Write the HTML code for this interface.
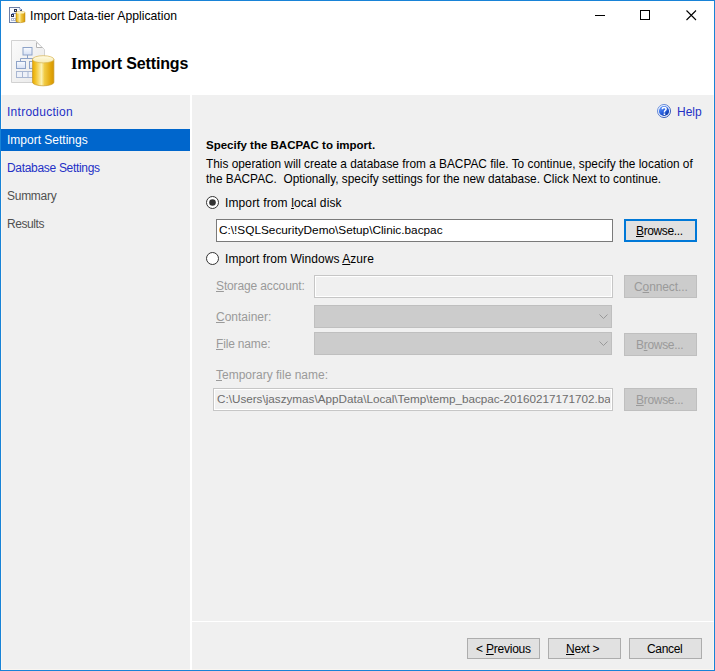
<!DOCTYPE html>
<html><head><meta charset="utf-8">
<style>
html,body{margin:0;padding:0;}
body{width:715px;height:671px;position:relative;overflow:hidden;background:#f0f0f0;font-family:"Liberation Sans",sans-serif;}
.a{position:absolute;}
.t{position:absolute;white-space:nowrap;line-height:12px;font-size:12px;color:#000;}
#win{position:absolute;left:0;top:0;width:713px;height:669px;border:1px solid #1883d7;background:#f0f0f0;}
#top{left:1px;top:1px;width:713px;height:94px;background:#fff;}
#splitv{left:190px;top:95px;width:2px;height:575px;background:#fff;}
#splith{left:192px;top:621px;width:522px;height:1px;background:#fff;}
#leftedge{left:1px;top:95px;width:1px;height:575px;background:#faf6f1;}
#rightedge{left:713px;top:95px;width:1px;height:575px;background:#faf6f1;}
#botedge{left:1px;top:669px;width:713px;height:1px;background:#faf6f1;}
#sel{left:1px;top:129px;width:189px;height:22px;background:#0066cc;}
.link{color:#2430c6;}
.gray{color:#505050;}
.dis{color:#9a9a9a;}
.btn{position:absolute;box-sizing:border-box;background:#e1e1e1;border:1px solid #adadad;}
.btnd{position:absolute;box-sizing:border-box;background:#cccccc;border:1px solid #bfbfbf;}
.u{text-decoration:underline;}
</style></head><body>
<div id="win"></div>
<div class="a" id="top"></div>
<div class="a" id="leftedge"></div>
<div class="a" id="rightedge"></div>
<div class="a" id="botedge"></div>
<div class="a" id="splitv"></div>
<div class="a" id="splith"></div>

<!-- title bar -->
<div class="t" style="left:30px;top:10px;font-size:12.2px;">Import Data-tier Application</div>
<div class="a" style="left:595px;top:15px;width:10px;height:1px;background:#000;"></div>
<div class="a" style="left:640px;top:10px;width:8px;height:8px;border:1px solid #000;"></div>
<svg class="a" style="left:686px;top:10px" width="11" height="11" viewBox="0 0 11 11"><path d="M0.5 0.5L10 10M10 0.5L0.5 10" stroke="#000" stroke-width="1.1" fill="none"/></svg>

<!-- header -->
<div class="t" style="left:71px;top:56px;font-size:16px;line-height:16px;font-weight:bold;letter-spacing:-0.14px;"><span style="font-family:'Liberation Serif',serif;font-size:16.5px;">I</span>mport Settings</div>

<!-- nav -->
<div class="a" id="sel"></div>
<div class="t link" style="left:7px;top:106px;letter-spacing:0.27px;">Introduction</div>
<div class="t" style="left:7px;top:134px;color:#fff;">Import Settings</div>
<div class="t link" style="left:7px;top:162px;letter-spacing:-0.31px;">Database Settings</div>
<div class="t gray" style="left:7px;top:190px;letter-spacing:-0.27px;">Summary</div>
<div class="t gray" style="left:7px;top:218px;letter-spacing:-0.43px;">Results</div>

<!-- help -->
<div class="t link" style="left:677px;top:106px;">Help</div>

<!-- content -->
<div class="t" style="left:206px;top:139px;font-weight:bold;font-size:11.5px;">Specify the BACPAC to import.</div>
<div class="t" style="left:206px;top:158px;font-size:11.85px;">This operation will create a database from a BACPAC file. To continue, specify the location of</div>
<div class="t" style="left:206px;top:173px;font-size:11.85px;">the BACPAC.&nbsp; Optionally, specify settings for the new database. Click Next to continue.</div>

<div class="t" style="left:225px;top:197px;letter-spacing:0.12px;">Import from <span class="u">l</span>ocal disk</div>
<div class="a" style="left:216px;top:219px;width:395px;height:21px;border:1px solid #7a7a7a;background:#fff;"></div>
<div class="t" style="left:219px;top:224px;font-size:11.8px;">C:\!SQLSecurityDemo\Setup\Clinic.bacpac</div>
<div class="a" style="left:624px;top:219px;width:69px;height:19px;border:2px solid #0078d7;background:#e1e1e1;"></div>
<div class="t" style="left:636px;top:225px;letter-spacing:-0.37px;"><span class="u">B</span>rowse...</div>

<div class="t" style="left:225px;top:253px;letter-spacing:0.06px;">Import from Windows <span class="u">A</span>zure</div>

<div class="t dis" style="left:216px;top:280px;letter-spacing:-0.13px;"><span class="u">S</span>torage account:</div>
<div class="a" style="left:314px;top:275px;width:297px;height:21px;border:1px solid #c6c6c6;background:#f0f0f0;box-shadow:inset 0 0 0 1px #fff;"></div>
<div class="btnd" style="left:624px;top:275px;width:73px;height:23px;"></div>
<div class="t dis" style="left:634px;top:281px;letter-spacing:-0.11px;">C<span class="u">o</span>nnect...</div>

<div class="t dis" style="left:216px;top:311px;"><span class="u">C</span>ontainer:</div>
<div class="btnd" style="left:314px;top:305px;width:298px;height:23px;"></div>
<div class="t dis" style="left:216px;top:338px;letter-spacing:-0.17px;"><span class="u">F</span>ile name:</div>
<div class="btnd" style="left:314px;top:332px;width:298px;height:23px;"></div>
<div class="btnd" style="left:624px;top:333px;width:73px;height:23px;"></div>
<div class="t dis" style="left:636px;top:339px;letter-spacing:-0.3px;">B<span class="u">r</span>owse...</div>

<div class="t dis" style="left:216px;top:369px;"><span class="u">T</span>emporary file name:</div>
<div class="a" style="left:213px;top:388px;width:398px;height:21px;border:1px solid #c6c6c6;background:#f0f0f0;box-shadow:inset 0 0 0 1px #fff;overflow:hidden;"></div>
<div class="a" style="left:214px;top:389px;width:396px;height:21px;overflow:hidden;"><div class="t" style="left:3px;top:4px;font-size:11.7px;color:#6d6d6d;">C:\Users\jaszymas\AppData\Local\Temp\temp_bacpac-20160217171702.bacpac</div></div>
<div class="btnd" style="left:624px;top:388px;width:73px;height:23px;"></div>
<div class="t dis" style="left:636px;top:394px;letter-spacing:-0.3px;"><span class="u">B</span>rowse...</div>

<!-- bottom buttons -->
<div class="btn" style="left:467px;top:638px;width:73px;height:21px;"></div>
<div class="t" style="left:476px;top:643px;letter-spacing:-0.22px;">&lt; <span class="u">P</span>revious</div>
<div class="btn" style="left:548px;top:638px;width:73px;height:21px;"></div>
<div class="t" style="left:566px;top:643px;letter-spacing:-0.3px;"><span class="u">N</span>ext &gt;</div>
<div class="btn" style="left:629px;top:638px;width:73px;height:21px;"></div>
<div class="t" style="left:647px;top:643px;letter-spacing:-0.32px;">Cancel</div>

<!-- title icon -->
<svg class="a" style="left:7px;top:5px" width="20" height="20" viewBox="7 5 20 20" shape-rendering="crispEdges">
<defs>
<linearGradient id="gs" x1="0" x2="1" y1="0" y2="0"><stop offset="0" stop-color="#e0a800"/><stop offset="0.15" stop-color="#f2c83a"/><stop offset="0.4" stop-color="#f8eaa4"/><stop offset="0.6" stop-color="#eec540"/><stop offset="1" stop-color="#d89800"/></linearGradient>
</defs>
<rect x="9" y="7" width="11" height="16" fill="#6c7ea6"/>
<rect x="10" y="8" width="10" height="14" fill="#f7f9fd"/>
<rect x="20" y="9" width="2" height="13" fill="#6c7ea6"/>
<rect x="19" y="8" width="2" height="2" fill="#b9c6e6"/>
<rect x="20" y="10" width="2" height="1" fill="#3d4b70"/>
<rect x="14" y="9" width="3" height="3" fill="#27314d"/>
<rect x="15" y="10" width="1" height="1" fill="#dfe8ff"/>
<rect x="11" y="14" width="3" height="3" fill="#27314d"/>
<rect x="12" y="15" width="1" height="1" fill="#dfe8ff"/>
<rect x="12" y="13" width="4" height="1" fill="#7d95d0"/>
<rect x="11" y="18" width="5" height="3" fill="#aeb9d2"/>
<rect x="12" y="19" width="1" height="1" fill="#fff"/>
<rect x="14" y="19" width="1" height="1" fill="#fff"/>
</svg>
<svg class="a" style="left:7px;top:5px" width="20" height="20" viewBox="7 5 20 20">
<path d="M16 12.2Q20.5 10.2 25 12.2V21.8Q20.5 23.6 16 21.8Z" fill="url(#gs)" stroke="#b8891c" stroke-width="0.5"/>
<ellipse cx="20.5" cy="12.4" rx="4.2" ry="1.2" fill="#fcf3c8"/>
</svg>

<!-- header icon -->
<svg class="a" style="left:5px;top:35px" width="55" height="55" viewBox="5 35 55 55">
<defs>
<linearGradient id="gc" x1="0" x2="1" y1="0" y2="0"><stop offset="0" stop-color="#e6a800"/><stop offset="0.15" stop-color="#f3c42c"/><stop offset="0.42" stop-color="#fbf1b2"/><stop offset="0.56" stop-color="#f1cb44"/><stop offset="0.85" stop-color="#e2a60a"/><stop offset="1" stop-color="#d69600"/></linearGradient>
<linearGradient id="gt" x1="0" x2="0" y1="0" y2="1"><stop offset="0" stop-color="#fffbe6"/><stop offset="1" stop-color="#f6eab0"/></linearGradient>
<linearGradient id="gd" x1="0" x2="1" y1="0" y2="1"><stop offset="0" stop-color="#fbfbfb"/><stop offset="1" stop-color="#e8e8e8"/></linearGradient>
<linearGradient id="gb" x1="0" x2="0" y1="0" y2="1"><stop offset="0" stop-color="#fafcff"/><stop offset="1" stop-color="#d6e0f4"/></linearGradient>
</defs>
<path d="M11.5 40.5H35.5L44.5 49.5V82.5H11.5Z" fill="url(#gd)" stroke="#d2d2d2" stroke-width="1"/>
<path d="M36.5 42.5V47.5H42.5" fill="#fff" stroke="#b4b4b4" stroke-width="1"/>
<path d="M36.5 42.5L42.5 47.5" stroke="#cfcfcf" stroke-width="0.8"/>
<rect x="23" y="47.5" width="9" height="7.5" fill="url(#gb)" stroke="#8ea3c8" stroke-width="1"/>
<path d="M27.5 55V58.5M20.5 61V58.5H34V61" stroke="#8ea3c8" stroke-width="1" fill="none"/>
<rect x="16.5" y="61.5" width="9" height="7" fill="url(#gb)" stroke="#8ea3c8" stroke-width="1"/>
<rect x="29.5" y="61.5" width="9" height="7" fill="url(#gb)" stroke="#8ea3c8" stroke-width="1"/>
<rect x="16.5" y="71.5" width="21" height="6" fill="#eef1f8" stroke="#a9b7d2" stroke-width="1"/>
<path d="M22.5 71.5V77.5M28 71.5V77.5M33 71.5V77.5" stroke="#a9b7d2" stroke-width="1"/>
<path d="M32.5 59.3V82.2A10.7 3.6 0 0 0 53.9 82.2V59.3Z" fill="url(#gc)"/>
<path d="M32.5 59.3V82.2A10.7 3.6 0 0 0 53.9 82.2V59.3" fill="none" stroke="#c99a2a" stroke-width="0.7"/>
<ellipse cx="43.2" cy="59.3" rx="10.7" ry="3.6" fill="url(#gt)" stroke="#d9b450" stroke-width="0.7"/>
</svg>

<!-- help icon -->
<svg class="a" style="left:657px;top:104px" width="14" height="14" viewBox="0 0 14 14">
<defs>
<linearGradient id="gh" x1="0.2" x2="0.8" y1="0.1" y2="0.9"><stop offset="0" stop-color="#5b93fa"/><stop offset="0.5" stop-color="#2b62e0"/><stop offset="1" stop-color="#0b38a8"/></linearGradient>
<linearGradient id="gr" x1="0" x2="1" y1="0" y2="1"><stop offset="0" stop-color="#7fa2e6"/><stop offset="1" stop-color="#1f44a8"/></linearGradient>
</defs>
<circle cx="7" cy="7" r="6.5" fill="#eef4ff" stroke="url(#gr)" stroke-width="1"/>
<circle cx="7" cy="7" r="5.1" fill="url(#gh)"/>
<path d="M5.3 5.2Q5.3 3.5 7.2 3.5Q9.1 3.5 9.1 5.1Q9.1 6.1 8 6.7Q7.4 7.1 7.4 8.4" stroke="#fff" stroke-width="1.5" fill="none"/>
<rect x="6.6" y="9.4" width="1.6" height="1.6" fill="#fff"/>
</svg>

<!-- radios -->
<svg class="a" style="left:206px;top:196px" width="13" height="13" viewBox="0 0 13 13">
<circle cx="6.5" cy="6.5" r="6" fill="#fff" stroke="#333" stroke-width="1"/>
<circle cx="6.5" cy="6.5" r="3.3" fill="#333"/>
</svg>
<svg class="a" style="left:206px;top:252px" width="13" height="13" viewBox="0 0 13 13">
<circle cx="6.5" cy="6.5" r="6" fill="#fff" stroke="#333" stroke-width="1"/>
</svg>

<!-- combo chevrons -->
<svg class="a" style="left:599px;top:314px" width="9" height="6" viewBox="0 0 9 6"><path d="M0.5 0.5L4.5 4.5L8.5 0.5" stroke="#999" stroke-width="1" fill="none"/></svg>
<svg class="a" style="left:599px;top:341px" width="9" height="6" viewBox="0 0 9 6"><path d="M0.5 0.5L4.5 4.5L8.5 0.5" stroke="#999" stroke-width="1" fill="none"/></svg>
</body></html>
